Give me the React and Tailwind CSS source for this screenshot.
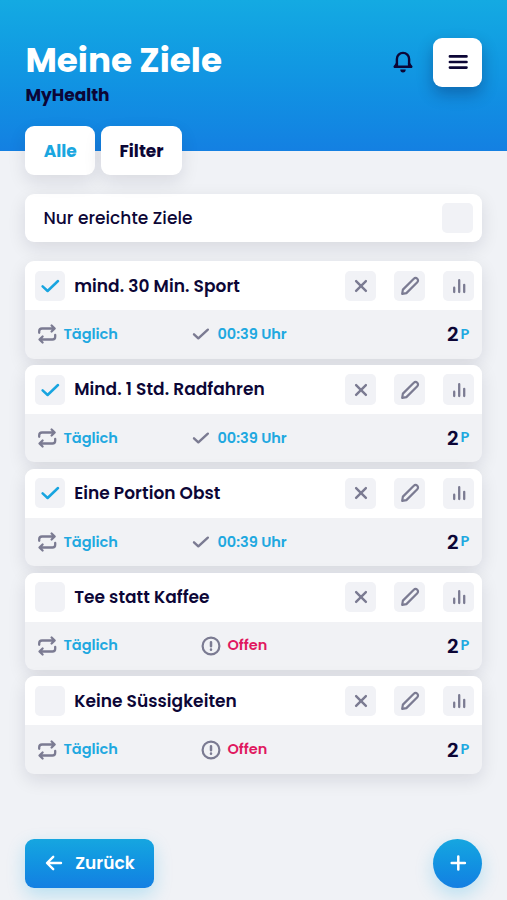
import React from "react";

const goals = [
  { id: 1, title: "mind. 30 Min. Sport", done: true, spacing: "tracking-[0.05px]" },
  { id: 2, title: "Mind. 1 Std. Radfahren", done: true, spacing: "tracking-[0.05px]" },
  { id: 3, title: "Eine Portion Obst", done: true, spacing: "tracking-[0.03px]" },
  { id: 4, title: "Tee statt Kaffee", done: false, spacing: "tracking-[0.03px]" },
  { id: 5, title: "Keine Süssigkeiten", done: false, spacing: "tracking-[0.03px]" },
];

/* ---------------- ICONS ---------------- */

const Icon = ({ size = 24, width = 2, className = "", children }) => (
  <svg
    width={size}
    height={size}
    viewBox="0 0 24 24"
    fill="none"
    stroke="currentColor"
    strokeWidth={width}
    strokeLinecap="round"
    strokeLinejoin="round"
    className={`shrink-0 ${className}`}
  >
    {children}
  </svg>
);

const BellIcon = () => (
  <Icon width={2.4}>
    <path d="M3.8 16.8h16.4M5.9 16.4V9a6.1 6.1 0 0 1 12.2 0v7.4" />
    <path d="m3.9 16.6 2-3M20.1 16.6l-2-3" />
    <path d="M9.3 19.6h5.4a2.7 2.9 0 0 1-5.4 0z" fill="currentColor" stroke="none" />
  </Icon>
);

const MenuIcon = () => (
  <Icon width={2.6}>
    <path d="M3.9 6.4h16.6M3.9 12h16.6M3.9 17.6h16.6" />
  </Icon>
);

const CheckIcon = () => (
  <Icon width={2.5}>
    <path d="m4.6 12.4 5 4.6L20 7" />
  </Icon>
);

const SmallCheckIcon = () => (
  <Icon size={20} width={2.9}>
    <path d="m3.6 12.4 5.2 4.8L20.2 6.8" />
  </Icon>
);

const CloseIcon = () => (
  <Icon width={2.4}>
    <path d="m7.1 7.1 9.8 9.8M16.9 7.1l-9.8 9.8" />
  </Icon>
);

const PencilIcon = () => (
  <Icon width={2.2}>
    <path d="M4.2 19.8 4.9 15.6 15.8 4.7a2.4 2.4 0 0 1 3.5 3.5L8.4 19.1z" />
  </Icon>
);

const ChartIcon = () => (
  <Icon width={2.3}>
    <path d="M7.2 13.7V18M12.2 6.2V18M17.2 10.8V18" />
  </Icon>
);

const RepeatIcon = () => (
  <Icon width={2.3}>
    <path d="M4.2 10.8V9.3a2.8 2.8 0 0 1 2.8-2.8h12.2M16.6 3.5l3.1 3-3.1 3" />
    <path d="M20.2 13v1.7a2.8 2.8 0 0 1-2.8 2.8H5M7.6 14.5l-3.1 3 3.1 3" />
  </Icon>
);

const AlertIcon = () => (
  <Icon width={2.2}>
    <circle cx="12" cy="12" r="8.4" />
    <path d="M12 8.2v4M12 15.6v.2" strokeWidth="2.5" />
  </Icon>
);

const BackIcon = () => (
  <Icon width={2.4}>
    <path d="M19 12H5.6M11.2 5.8 5 12l6.2 6.2" />
  </Icon>
);

const PlusIcon = () => (
  <Icon width={2.5}>
    <path d="M12.3 5.4v13.2M5.7 12h13.2" />
  </Icon>
);

/* ---------------- PARTS ---------------- */

const ActionButton = ({ label, children }) => (
  <button
    aria-label={label}
    className="flex size-[30.5px] items-center justify-center rounded-[5px] bg-[#f1f2f6] text-[#7b7b92]"
  >
    {children}
  </button>
);

const GoalCard = ({ goal }) => (
  <div className="h-[97.4px] overflow-hidden rounded-[9px] bg-[#f1f2f5] shadow-[0_6px_18px_rgba(20,20,50,0.11)]">
    <div className="flex h-[49px] items-center bg-white pr-[8.5px] pl-[9.7px]">
      <div className="flex size-[30px] items-center justify-center rounded-[5px] bg-[#f1f2f6] text-[#18a5e0]">
        {goal.done && <CheckIcon />}
      </div>
      <h2 className={`ml-[9.2px] flex-1 pt-px text-[17px] font-semibold ${goal.spacing}`}>
        {goal.title}
      </h2>
      <div className="flex gap-[18.5px]">
        <ActionButton label="Löschen">
          <CloseIcon />
        </ActionButton>
        <ActionButton label="Bearbeiten">
          <PencilIcon />
        </ActionButton>
        <ActionButton label="Statistik">
          <ChartIcon />
        </ActionButton>
      </div>
    </div>

    <div className="flex h-[48.4px] items-center pr-[13px] pl-[9.7px] text-[14.5px] font-semibold text-[#20a8e0]">
      <div className="flex flex-1 items-center gap-[4.5px]">
        <span className="text-[#7b7b92]">
          <RepeatIcon />
        </span>
        <span className="pt-px">Täglich</span>
      </div>
      {goal.done ? (
        <div className="flex items-center gap-[6px]">
          <span className="text-[#7b7b92]">
            <SmallCheckIcon />
          </span>
          <span className="w-[71px] pt-px whitespace-nowrap">00:39 Uhr</span>
        </div>
      ) : (
        <div className="mr-[20px] flex items-center gap-[4px]">
          <span className="text-[#7b7b92]">
            <AlertIcon />
          </span>
          <span className="w-[41px] pt-px text-[#e01860]">Offen</span>
        </div>
      )}
      <div className="flex w-[181px] items-center justify-end gap-[2px]">
        <span className="text-[20px] text-[#0c0636]">2</span>
        <span className="text-[14.5px]">P</span>
      </div>
    </div>
  </div>
);

const App = () => {
  return (
    <div className="flex h-[900px] w-full flex-col overflow-hidden bg-[#f0f2f6] font-[Poppins,Inter,sans-serif] text-[#0c0636]">
      {/* Header */}
      <header className="flex h-[151.4px] shrink-0 items-start justify-between bg-linear-to-b from-[#14aae2] to-[#1480e2] pr-[24.6px] pl-[25.4px]">
        <div className="pt-[40px]">
          <h1 className="text-[34.2px] leading-[40px] font-bold text-white">Meine Ziele</h1>
          <p className="mt-[4px] text-[17px] leading-[22px] font-bold">MyHealth</p>
        </div>
        <div className="flex items-center gap-[18.5px] pt-[37.5px]">
          <button aria-label="Mitteilungen">
            <BellIcon />
          </button>
          <button
            aria-label="Menü"
            className="flex size-[49px] items-center justify-center rounded-[9px] bg-white shadow-[0_7px_16px_rgba(10,10,60,0.3)]"
          >
            <MenuIcon />
          </button>
        </div>
      </header>

      <main className="flex flex-1 flex-col pr-[24.6px] pl-[25.3px]">
        {/* Tabs */}
        <div className="relative -mt-[25px] flex gap-[6px] text-[17px] font-bold">
          <button className="h-[49px] w-[70px] rounded-[9px] bg-white pt-[2px] text-[#1aa6e0] shadow-[0_7px_18px_rgba(20,20,50,0.1)]">
            Alle
          </button>
          <button className="h-[49px] w-[80.5px] rounded-[9px] bg-white pt-[2px] shadow-[0_7px_18px_rgba(20,20,50,0.1)]">
            Filter
          </button>
        </div>

        {/* Filter row */}
        <div className="mt-[18.6px] flex h-[48.5px] items-center justify-between rounded-[9px] bg-white pr-[9.7px] pl-[18.2px] shadow-[0_6px_18px_rgba(20,20,50,0.11)]">
          <span className="pt-px text-[17px] font-medium tracking-[0.05px]">Nur ereichte Ziele</span>
          <span className="size-[30.5px] rounded-[5px] bg-[#f1f2f6]" />
        </div>

        {/* Goals */}
        <div className="mt-[18.8px] flex flex-col gap-[6.4px]">
          {goals.map((goal) => (
            <GoalCard key={goal.id} goal={goal} />
          ))}
        </div>

        {/* Footer */}
        <footer className="mt-auto mb-[12.5px] flex items-center justify-between text-white">
          <button className="flex h-[49px] w-[128.5px] items-center gap-[9px] rounded-[9px] bg-linear-to-b from-[#16a6e0] to-[#147fe2] pl-[17px] text-[17px] font-semibold shadow-[0_7px_18px_rgba(20,170,226,0.25)]">
            <BackIcon />
            <span className="pt-px">Zurück</span>
          </button>
          <button
            aria-label="Neues Ziel"
            className="flex size-[49px] items-center justify-center rounded-full bg-linear-to-b from-[#16a6e0] to-[#147fe2] shadow-[0_7px_18px_rgba(20,170,226,0.25)]"
          >
            <PlusIcon />
          </button>
        </footer>
      </main>
    </div>
  );
};

export default App;
